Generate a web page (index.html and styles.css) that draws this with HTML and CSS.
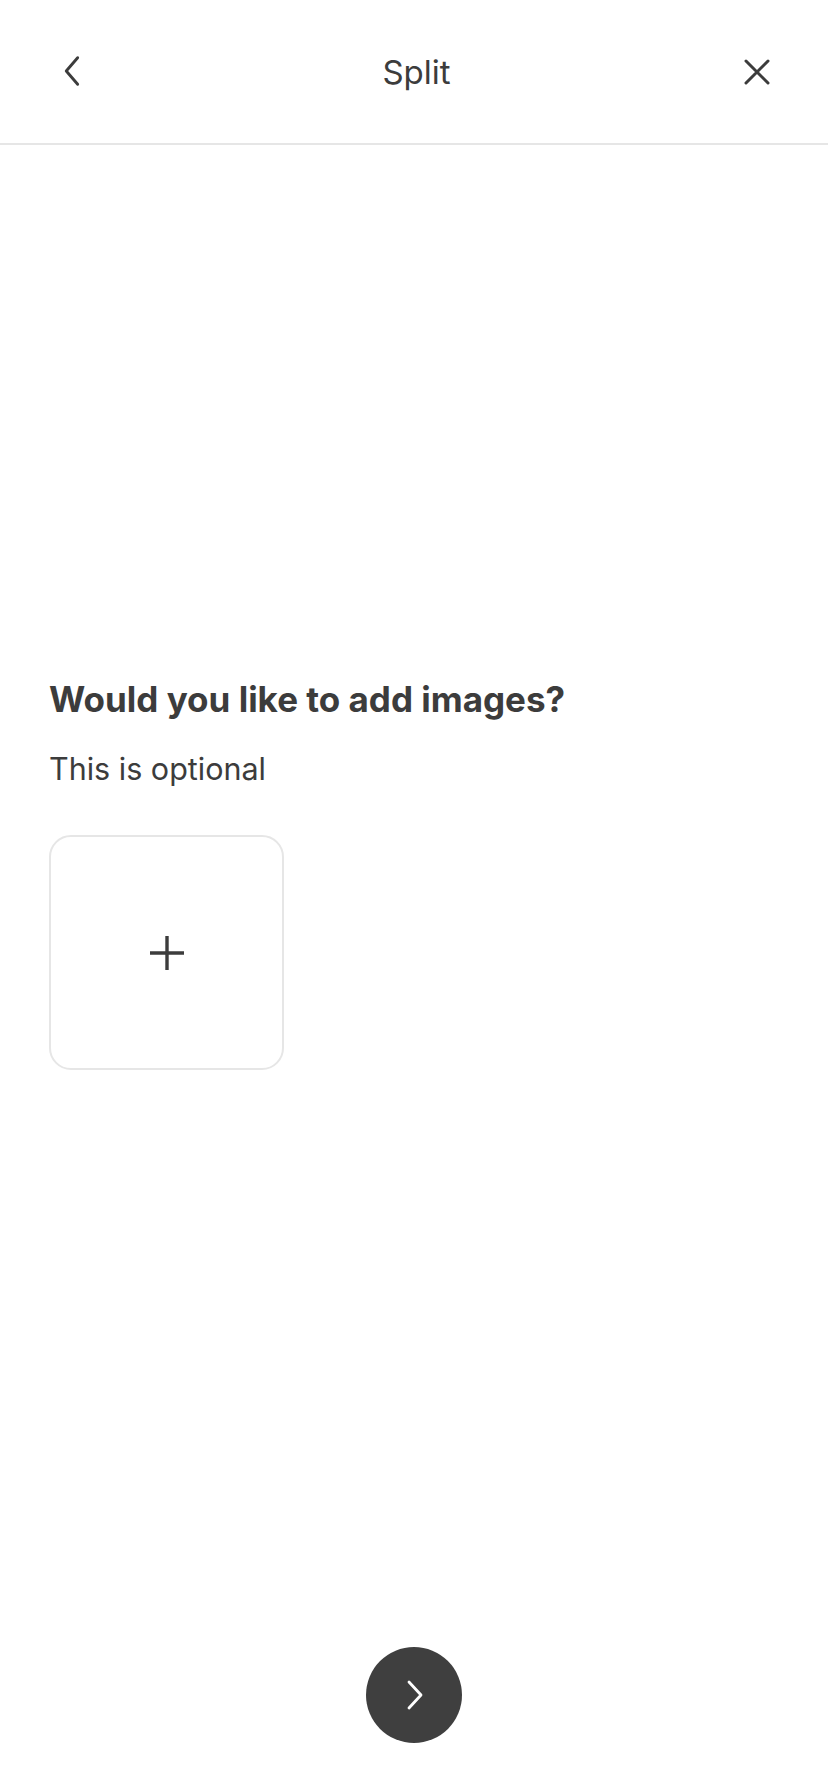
FILE: index.html
```html
<!DOCTYPE html>
<html lang="en">
<head>
<meta charset="utf-8">
<title>Split</title>
<link rel="stylesheet" href="styles.css">
</head>
<body>
<div class="screen">
  <header class="topbar">
    <button class="icon-btn back" aria-label="Back">
      <svg width="40" height="40" viewBox="0 0 40 40"><path d="M27 6 L15 20 L27 34" fill="none" stroke="#3c3c3c" stroke-width="3" stroke-linecap="round" stroke-linejoin="round" transform="translate(-4 0) scale(0.95)"/></svg>
    </button>
    <h1 class="title">Split</h1>
    <button class="icon-btn close" aria-label="Close">
      <svg width="40" height="40" viewBox="0 0 40 40"><path d="M9 9 L31 31 M31 9 L9 31" fill="none" stroke="#3c3c3c" stroke-width="3" stroke-linecap="round"/></svg>
    </button>
  </header>
  <main class="content">
    <h2 class="heading">Would you like to add images?</h2>
    <p class="subtitle">This is optional</p>
    <button class="add-tile" aria-label="Add image">
      <svg width="36" height="36" viewBox="0 0 36 36"><path d="M18 1 V35 M1 18 H35" stroke="#3c3c3c" stroke-width="3.4"/></svg>
    </button>
  </main>
  <footer class="footer">
    <button class="next-btn" aria-label="Next">
      <svg width="40" height="40" viewBox="0 0 40 40"><path d="M15 7 L27 20 L15 33" fill="none" stroke="#ffffff" stroke-width="2.8" stroke-linecap="round" stroke-linejoin="round"/></svg>
    </button>
  </footer>
</div>
</body>
</html>
```
FILE: styles.css
```css
* { box-sizing: border-box; }
html, body { margin: 0; padding: 0; background: #ffffff; }
body {
  font-family: "Inter", "Roboto", "Liberation Sans", sans-serif;
  color: #3c3c3c;
}
.screen {
  width: 828px;
  height: 1792px;
  display: flex;
  flex-direction: column;
}
.topbar {
  height: 145px;
  flex: 0 0 145px;
  border-bottom: 2px solid #e6e6e6;
  display: grid;
  grid-template-columns: 1fr auto 1fr;
  align-items: center;
  padding: 0 51px 0 56px;
}
.icon-btn {
  width: 40px;
  height: 40px;
  padding: 0;
  border: 0;
  background: none;
  display: flex;
  align-items: center;
  justify-content: center;
}
.back { justify-self: start; }
.close { justify-self: end; }
.title {
  margin: 0;
  font-size: 33px;
  font-weight: 400;
  color: #3c3c3c;
}
.content {
  flex: 1;
  padding: 532px 49px 0;
  display: flex;
  flex-direction: column;
  align-items: flex-start;
}
.heading {
  margin: 0;
  font-size: 35px;
  font-weight: 700;
  line-height: 44px;
  color: #3c3c3c;
}
.subtitle {
  margin: 26px 0 0;
  font-size: 30.5px;
  line-height: 44px;
  font-weight: 400;
}
.add-tile {
  margin-top: 44px;
  width: 235px;
  height: 235px;
  border: 2px solid #e6e6e6;
  border-radius: 22px;
  background: #ffffff;
  display: flex;
  align-items: center;
  justify-content: center;
  padding: 0;
}
.footer {
  display: flex;
  justify-content: center;
  padding-bottom: 49px;
}
.next-btn {
  width: 96px;
  height: 96px;
  border-radius: 50%;
  border: 0;
  background: #3f3f3f;
  display: flex;
  align-items: center;
  justify-content: center;
  padding: 0;
}
```
